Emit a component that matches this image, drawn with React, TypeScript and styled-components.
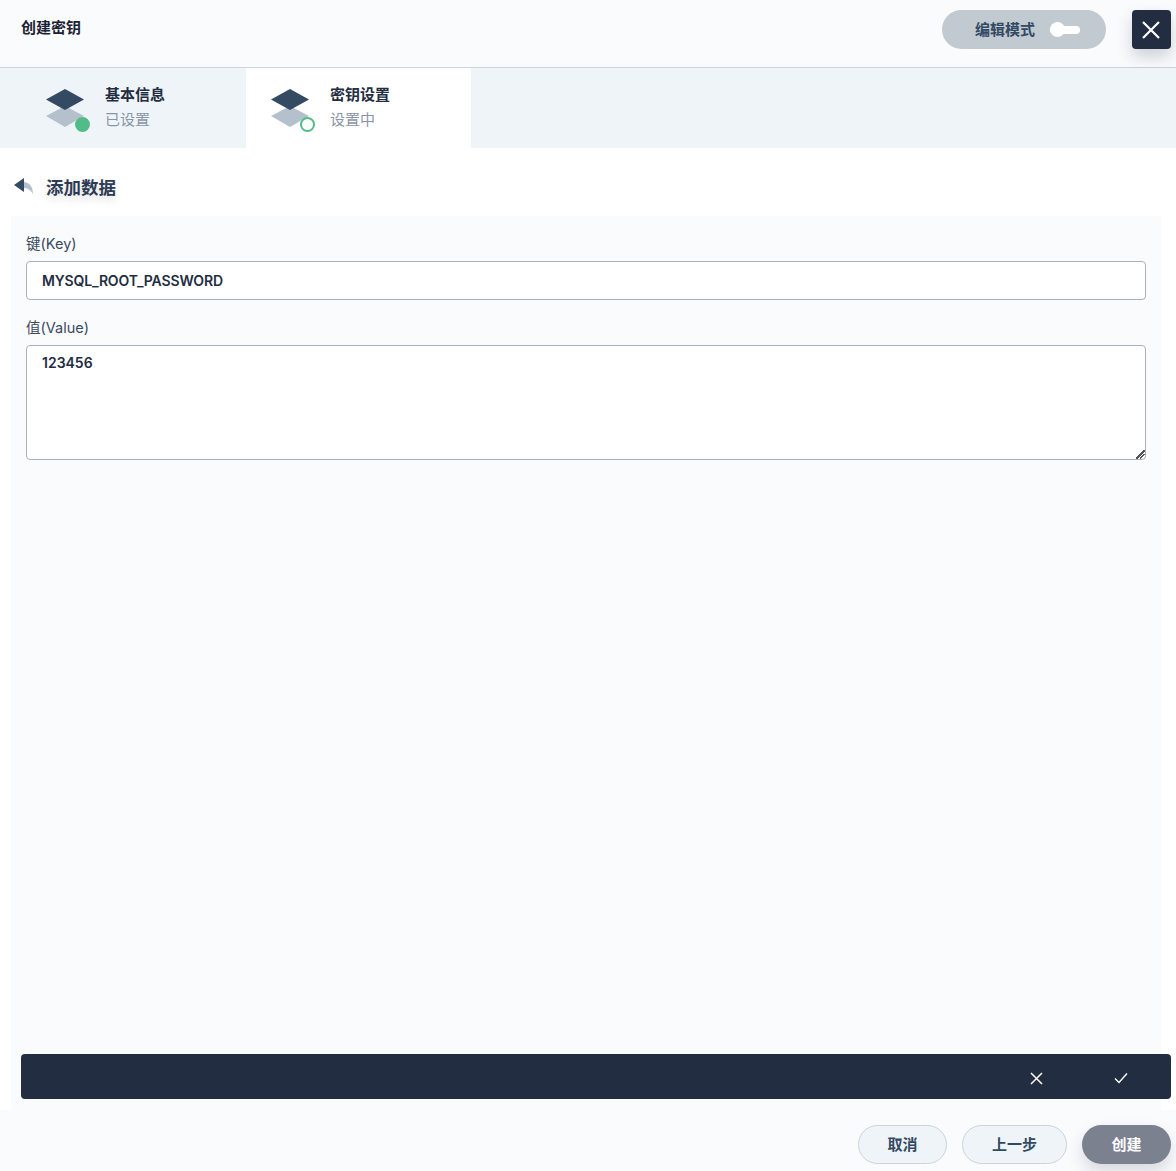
import React from "react";
import styled, { createGlobalStyle } from "styled-components";

const dark = "#232d42";
const slate = "#344a63";
const green = "#52bc88";
const fontStack = `Inter, "Noto Sans CJK SC", sans-serif`;

const GlobalStyle = createGlobalStyle`
    html, body {
        margin: 0;
        padding: 0;
        background: #fff;
    }
    * {
        box-sizing: border-box;
    }
`;

const Page = styled.div`
    width: 1176px;
    height: 1171px;
    display: flex;
    flex-direction: column;
    overflow: hidden;
    font-family: ${fontStack};
    color: ${dark};
    background: #fff;
`;

const Header = styled.header`
    height: 68px;
    flex: none;
    display: flex;
    align-items: flex-start;
    justify-content: space-between;
    padding: 10px 5px 0 21px;
    background: #fafbfd;
    border-bottom: 1px solid #ccd3dc;
`;

const HeaderTitle = styled.div`
    font-size: 15px;
    font-weight: 700;
    line-height: 36px;
    color: #1a2233;
`;

const HeaderActions = styled.div`
    display: flex;
    gap: 26px;
`;

const ModeToggle = styled.div`
    width: 164px;
    height: 39px;
    display: flex;
    align-items: center;
    gap: 15px;
    padding: 0 0 2px 33px;
    border-radius: 20px;
    background: #c1c9d1;
    font-size: 15px;
    font-weight: 700;
    color: ${slate};
`;

const SwitchTrack = styled.span`
    position: relative;
    width: 30px;
    height: 8px;
    margin-top: 2px;
    border-radius: 4px;
    background: #fff;
`;

const SwitchKnob = styled.span`
    position: absolute;
    left: 0;
    top: -4px;
    width: 15px;
    height: 15px;
    border-radius: 50%;
    background: #fff;
`;

const CloseButton = styled.button`
    width: 39px;
    height: 39px;
    padding: 0 1px 0 0;
    display: flex;
    align-items: center;
    justify-content: center;
    border: 0;
    border-radius: 4px;
    background: ${dark};
    box-shadow: 0 8px 16px rgba(35, 45, 66, 0.2);
`;

const Steps = styled.nav`
    height: 80px;
    flex: none;
    display: flex;
    background: #eff4f8;
`;

const Step = styled.div<{ $active?: boolean }>`
    width: ${(p) => (p.$active ? "225px" : "246px")};
    display: flex;
    align-items: flex-start;
    gap: 21px;
    padding: ${(p) => (p.$active ? "17px 0 0 25px" : "17px 0 0 46px")};
    background: ${(p) => (p.$active ? "#fff" : "transparent")};
`;

const StepIconBox = styled.div`
    position: relative;
    width: 38px;
    height: 38px;
    margin-top: 4px;
`;

const StepDot = styled.span<{ $done?: boolean }>`
    position: absolute;
    left: 29px;
    top: 28px;
    width: 15px;
    height: 15px;
    border-radius: 50%;
    border: 2px solid ${green};
    background: ${(p) => (p.$done ? green : "#fff")};
`;

const StepText = styled.div`
    display: flex;
    flex-direction: column;
    gap: 5px;
`;

const StepTitle = styled.div`
    font-size: 15px;
    font-weight: 700;
    line-height: 20px;
`;

const StepStatus = styled.div`
    font-size: 15px;
    line-height: 20px;
    color: #8a94a8;
`;

const Body = styled.main`
    flex: 1;
    min-height: 0;
    display: flex;
    flex-direction: column;
    padding-left: 11px;
    background: #fff;
`;

const SectionHead = styled.div`
    height: 68px;
    flex: none;
    display: flex;
    align-items: center;
    gap: 12px;
    padding-top: 8px;
    margin-left: 3px;
`;

const SectionTitle = styled.h2`
    margin: 0;
    font-size: 17.5px;
    font-weight: 700;
    color: #2e3b52;
    text-shadow: 0 4px 8px rgba(35, 45, 66, 0.15);
`;

const Panel = styled.section`
    width: 1150px;
    flex: 1;
    min-height: 0;
    display: flex;
    flex-direction: column;
    background: #f9fbfd;
`;

const Form = styled.div`
    flex: 1;
    padding: 18px 15px 0;
`;

const Label = styled.label`
    display: block;
    margin-bottom: 7px;
    font-size: 14.5px;
    line-height: 20px;
    color: #3c4a5e;
`;

const TextInput = styled.input`
    display: block;
    width: 100%;
    height: 39px;
    margin-bottom: 18px;
    padding: 0 15px;
    border: 1px solid #a9b1bc;
    border-radius: 4px;
    background: #fff;
    font-family: ${fontStack};
    font-size: 14px;
    font-weight: 600;
    letter-spacing: -0.15px;
    color: ${dark};
    outline: none;
`;

const TextArea = styled.textarea`
    display: block;
    width: 100%;
    height: 115px;
    padding: 7px 15px;
    border: 1px solid #a9b1bc;
    border-radius: 4px;
    background: #fff;
    font-family: ${fontStack};
    font-size: 14px;
    font-weight: 600;
    line-height: 20px;
    color: ${dark};
    outline: none;

    &::-webkit-resizer {
        background:
            linear-gradient(135deg, transparent 0 44%, #555 44% 56%, transparent 56%) 6px 6px / 9px 9px no-repeat,
            linear-gradient(135deg, transparent 0 40%, #555 40% 60%, transparent 60%) 10px 10px / 5px 5px no-repeat;
    }
`;

const ActionBar = styled.div`
    height: 45px;
    flex: none;
    display: flex;
    align-items: center;
    justify-content: flex-end;
    gap: 69px;
    margin: 0 -10px 11px 10px;
    padding: 3px 42px 0 0;
    border-radius: 4px;
    background: ${dark};
`;

const BarIcon = styled.button`
    width: 16px;
    height: 16px;
    padding: 0;
    display: flex;
    align-items: center;
    justify-content: center;
    border: 0;
    background: none;
`;

const Footer = styled.footer`
    height: 61px;
    flex: none;
    display: flex;
    align-items: flex-start;
    justify-content: flex-end;
    gap: 15px;
    padding: 15px 5px 0 0;
    background: #fafbfd;
`;

const FooterButton = styled.button<{ $primary?: boolean; $width: number }>`
    width: ${(p) => p.$width}px;
    height: 39px;
    padding: 0 0 3px;
    border: ${(p) => (p.$primary ? "0" : "1px solid #ccd3dc")};
    border-radius: 20px;
    background: ${(p) => (p.$primary ? "#7c8190" : "#eff4f8")};
    box-shadow: ${(p) => (p.$primary ? "0 8px 16px rgba(35, 45, 66, 0.16)" : "none")};
    font-family: ${fontStack};
    font-size: 15px;
    font-weight: 700;
    color: ${(p) => (p.$primary ? "#fff" : slate)};
`;

function StackIcon() {
    return (
        <svg width="38" height="38" viewBox="0 0 38 38">
            <path d="M0 27 19 17 38 27 19 38Z" fill="#b5c0cd" />
            <path d="M0 10.500 19 0 38 10.500 19 21Z" fill={slate} />
        </svg>
    );
}

function BackIcon() {
    return (
        <svg width="20" height="16" viewBox="0 0 20 16">
            <path d="M9 4C15 4 19 8 19 16 16 11 13 10 9 10Z" fill="#b5c0cd" />
            <path d="M0 7 10 0V14Z" fill={slate} />
        </svg>
    );
}

function CrossIcon({ size, weight }: { size: number; weight: number }) {
    return (
        <svg width={size} height={size} viewBox={`0 0 ${size} ${size}`}>
            <path
                d={`M1 1 ${size - 1} ${size - 1}M${size - 1} 1 1 ${size - 1}`}
                stroke="#fff"
                strokeWidth={weight}
                fill="none"
            />
        </svg>
    );
}

function CheckIcon() {
    return (
        <svg width="14" height="12" viewBox="0 0 14 12">
            <path d="M1 6.500 5 10.500 13 1.500" stroke="#fff" strokeWidth="1.400" fill="none" />
        </svg>
    );
}

export default function App() {
    return (
        <Page>
            <GlobalStyle />
            <Header>
                <HeaderTitle>创建密钥</HeaderTitle>
                <HeaderActions>
                    <ModeToggle>
                        编辑模式
                        <SwitchTrack>
                            <SwitchKnob />
                        </SwitchTrack>
                    </ModeToggle>
                    <CloseButton aria-label="关闭">
                        <CrossIcon size={18} weight={2.2} />
                    </CloseButton>
                </HeaderActions>
            </Header>
            <Steps>
                <Step>
                    <StepIconBox>
                        <StackIcon />
                        <StepDot $done />
                    </StepIconBox>
                    <StepText>
                        <StepTitle>基本信息</StepTitle>
                        <StepStatus>已设置</StepStatus>
                    </StepText>
                </Step>
                <Step $active>
                    <StepIconBox>
                        <StackIcon />
                        <StepDot />
                    </StepIconBox>
                    <StepText>
                        <StepTitle>密钥设置</StepTitle>
                        <StepStatus>设置中</StepStatus>
                    </StepText>
                </Step>
            </Steps>
            <Body>
                <SectionHead>
                    <BackIcon />
                    <SectionTitle>添加数据</SectionTitle>
                </SectionHead>
                <Panel>
                    <Form>
                        <Label>键(Key)</Label>
                        <TextInput defaultValue="MYSQL_ROOT_PASSWORD" />
                        <Label>值(Value)</Label>
                        <TextArea defaultValue="123456" />
                    </Form>
                    <ActionBar>
                        <BarIcon aria-label="取消">
                            <CrossIcon size={13} weight={1.5} />
                        </BarIcon>
                        <BarIcon aria-label="确定">
                            <CheckIcon />
                        </BarIcon>
                    </ActionBar>
                </Panel>
            </Body>
            <Footer>
                <FooterButton $width={89}>取消</FooterButton>
                <FooterButton $width={105}>上一步</FooterButton>
                <FooterButton $width={89} $primary>
                    创建
                </FooterButton>
            </Footer>
        </Page>
    );
}
